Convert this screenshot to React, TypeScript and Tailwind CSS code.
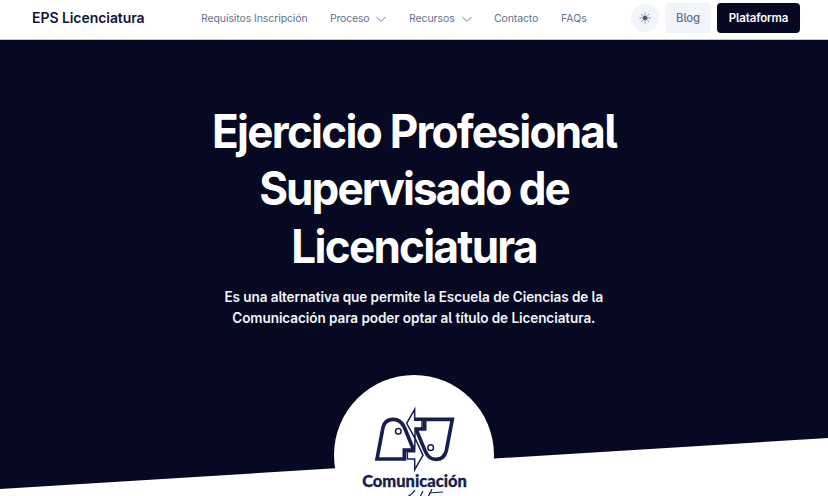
import React from "react";

function Chevron() {
  return (
    <svg className="-mt-px ml-[7px] h-[10px] w-[10px]" viewBox="0 0 10 10" fill="none" stroke="#64748b" strokeWidth="0.9">
      <path d="M.6 3 5 7.400 9.400 3" />
    </svg>
  );
}

function Sun() {
  return (
    <svg className="h-3 w-3" viewBox="0 0 12 12" stroke="#64748b" strokeWidth="0.8" strokeLinecap="round">
      <circle cx="6" cy="6" r="2.2" fill="#475569" />
      <path d="M6 .8v1.5M6 9.7v1.5M.8 6h1.5M9.7 6h1.5M2.3 2.3l1.1 1.1M8.6 8.6l1.1 1.1M9.7 2.3 8.6 3.4M3.4 8.6 2.3 9.7" />
    </svg>
  );
}

function Logo() {
  return (
    <svg className="-mb-[2px] ml-[2px] mt-[29px] h-[71px] w-[90px] shrink-0" viewBox="135 114 270 213" fill="none" stroke="#171f4d" strokeLinejoin="miter">
      <path strokeWidth="11" d="M156 279 174 184Q180 160 205 160Q227 160 238 184L264 247V252H238V279Z" />
      <path strokeWidth="11" d="M269 160H382L364 254Q357 280 333 280Q311 280 301 256L275 194V189H299V162" />
      <path strokeWidth="4.500" fill="#fff" d="M269 130V163H291V186H270V217L245 172Z" />
      <path strokeWidth="4.500" fill="#fff" d="M270 216 294 268 269 311V279H247V257H269Z" />
      <circle cx="220" cy="196" r="8.500" strokeWidth="4.500" />
      <circle cx="317" cy="245" r="8.500" strokeWidth="4.500" />
    </svg>
  );
}

export default function App() {
  return (
    <div className="h-[496px] w-[828px] overflow-hidden bg-white font-['Inter',sans-serif] [font-feature-settings:'cv05'_1]">
      <header className="flex h-10 items-center border-b border-[#c3c6d2] bg-white pb-[3px] pl-8 text-[10.500px] text-[#64748b]">
        <a className="-mt-px w-[169px] text-[14px] font-semibold tracking-[-0.060px] whitespace-nowrap text-[#111536]">EPS Licenciatura</a>
        <nav className="flex w-[430px] items-center pt-[2px] whitespace-nowrap">
          <a className="w-[129px] tracking-[-0.100px]">Requisitos Inscripción</a>
          <a className="flex w-[79px] items-center tracking-[-0.180px]"><span className="w-[39px]">Proceso</span><Chevron /></a>
          <a className="flex w-[85px] items-center tracking-[-0.080px]"><span className="w-[46px]">Recursos</span><Chevron /></a>
          <a className="w-[67px] tracking-[-0.120px]">Contacto</a>
          <a>FAQs</a>
        </nav>
        <div className="flex items-center">
          <button className="flex h-7 w-7 items-center justify-center rounded-full bg-[#f1f5f9]"><Sun /></button>
          <button className="ml-[6px] h-[30px] w-[46px] rounded-[4px] bg-[#f1f5f9] pt-[2px] text-[11.500px] font-medium tracking-[-0.200px]">Blog</button>
          <button className="ml-[6px] h-[30px] w-[83px] rounded-[4px] bg-[#060921] pt-[2px] text-[11.500px] font-semibold tracking-[-0.150px] text-white">Plataforma</button>
        </div>
      </header>
      <main>
        <section className="flex h-[449px] flex-col items-center bg-[#060921] pt-[63px] text-center text-white [clip-path:polygon(0_0,100%_0,100%_398px,0_100%)]">
          <h1 className="scale-x-[0.957] text-[46px] leading-[57.300px] font-bold tracking-[-1.800px] whitespace-nowrap">
            Ejercicio Profesional<br /><span className="tracking-[-2px]">Supervisado de</span><br />Licenciatura
          </h1>
          <p className="mt-[11px] scale-x-[0.967] text-[14px] leading-[21.500px] font-semibold tracking-[-0.080px] whitespace-nowrap text-[#f1f5f9]">
            Es una alternativa que permite la Escuela de Ciencias de la<br />Comunicación para poder optar al título de Licenciatura.
          </p>
        </section>
        <div className="relative mx-auto -mt-[114px] flex h-40 w-40 flex-col items-center overflow-hidden rounded-full bg-white">
          <Logo />
          <span className="ml-px font-['Lato',sans-serif] text-[16.500px] leading-[17px] font-black text-[#171f4d] [-webkit-text-stroke:0.3px_#171f4d] [font-feature-settings:normal]">Comunicación</span>
          <svg className="-mt-px h-8 w-[70px] shrink-0" viewBox="0 0 70 32" fill="none" stroke="#171f4d" strokeWidth="1.200">
            <path d="M36 1Q34 5 28 8M44 2 41 8M53 0 49 8M50 4 64 3" />
          </svg>
        </div>
      </main>
    </div>
  );
}
